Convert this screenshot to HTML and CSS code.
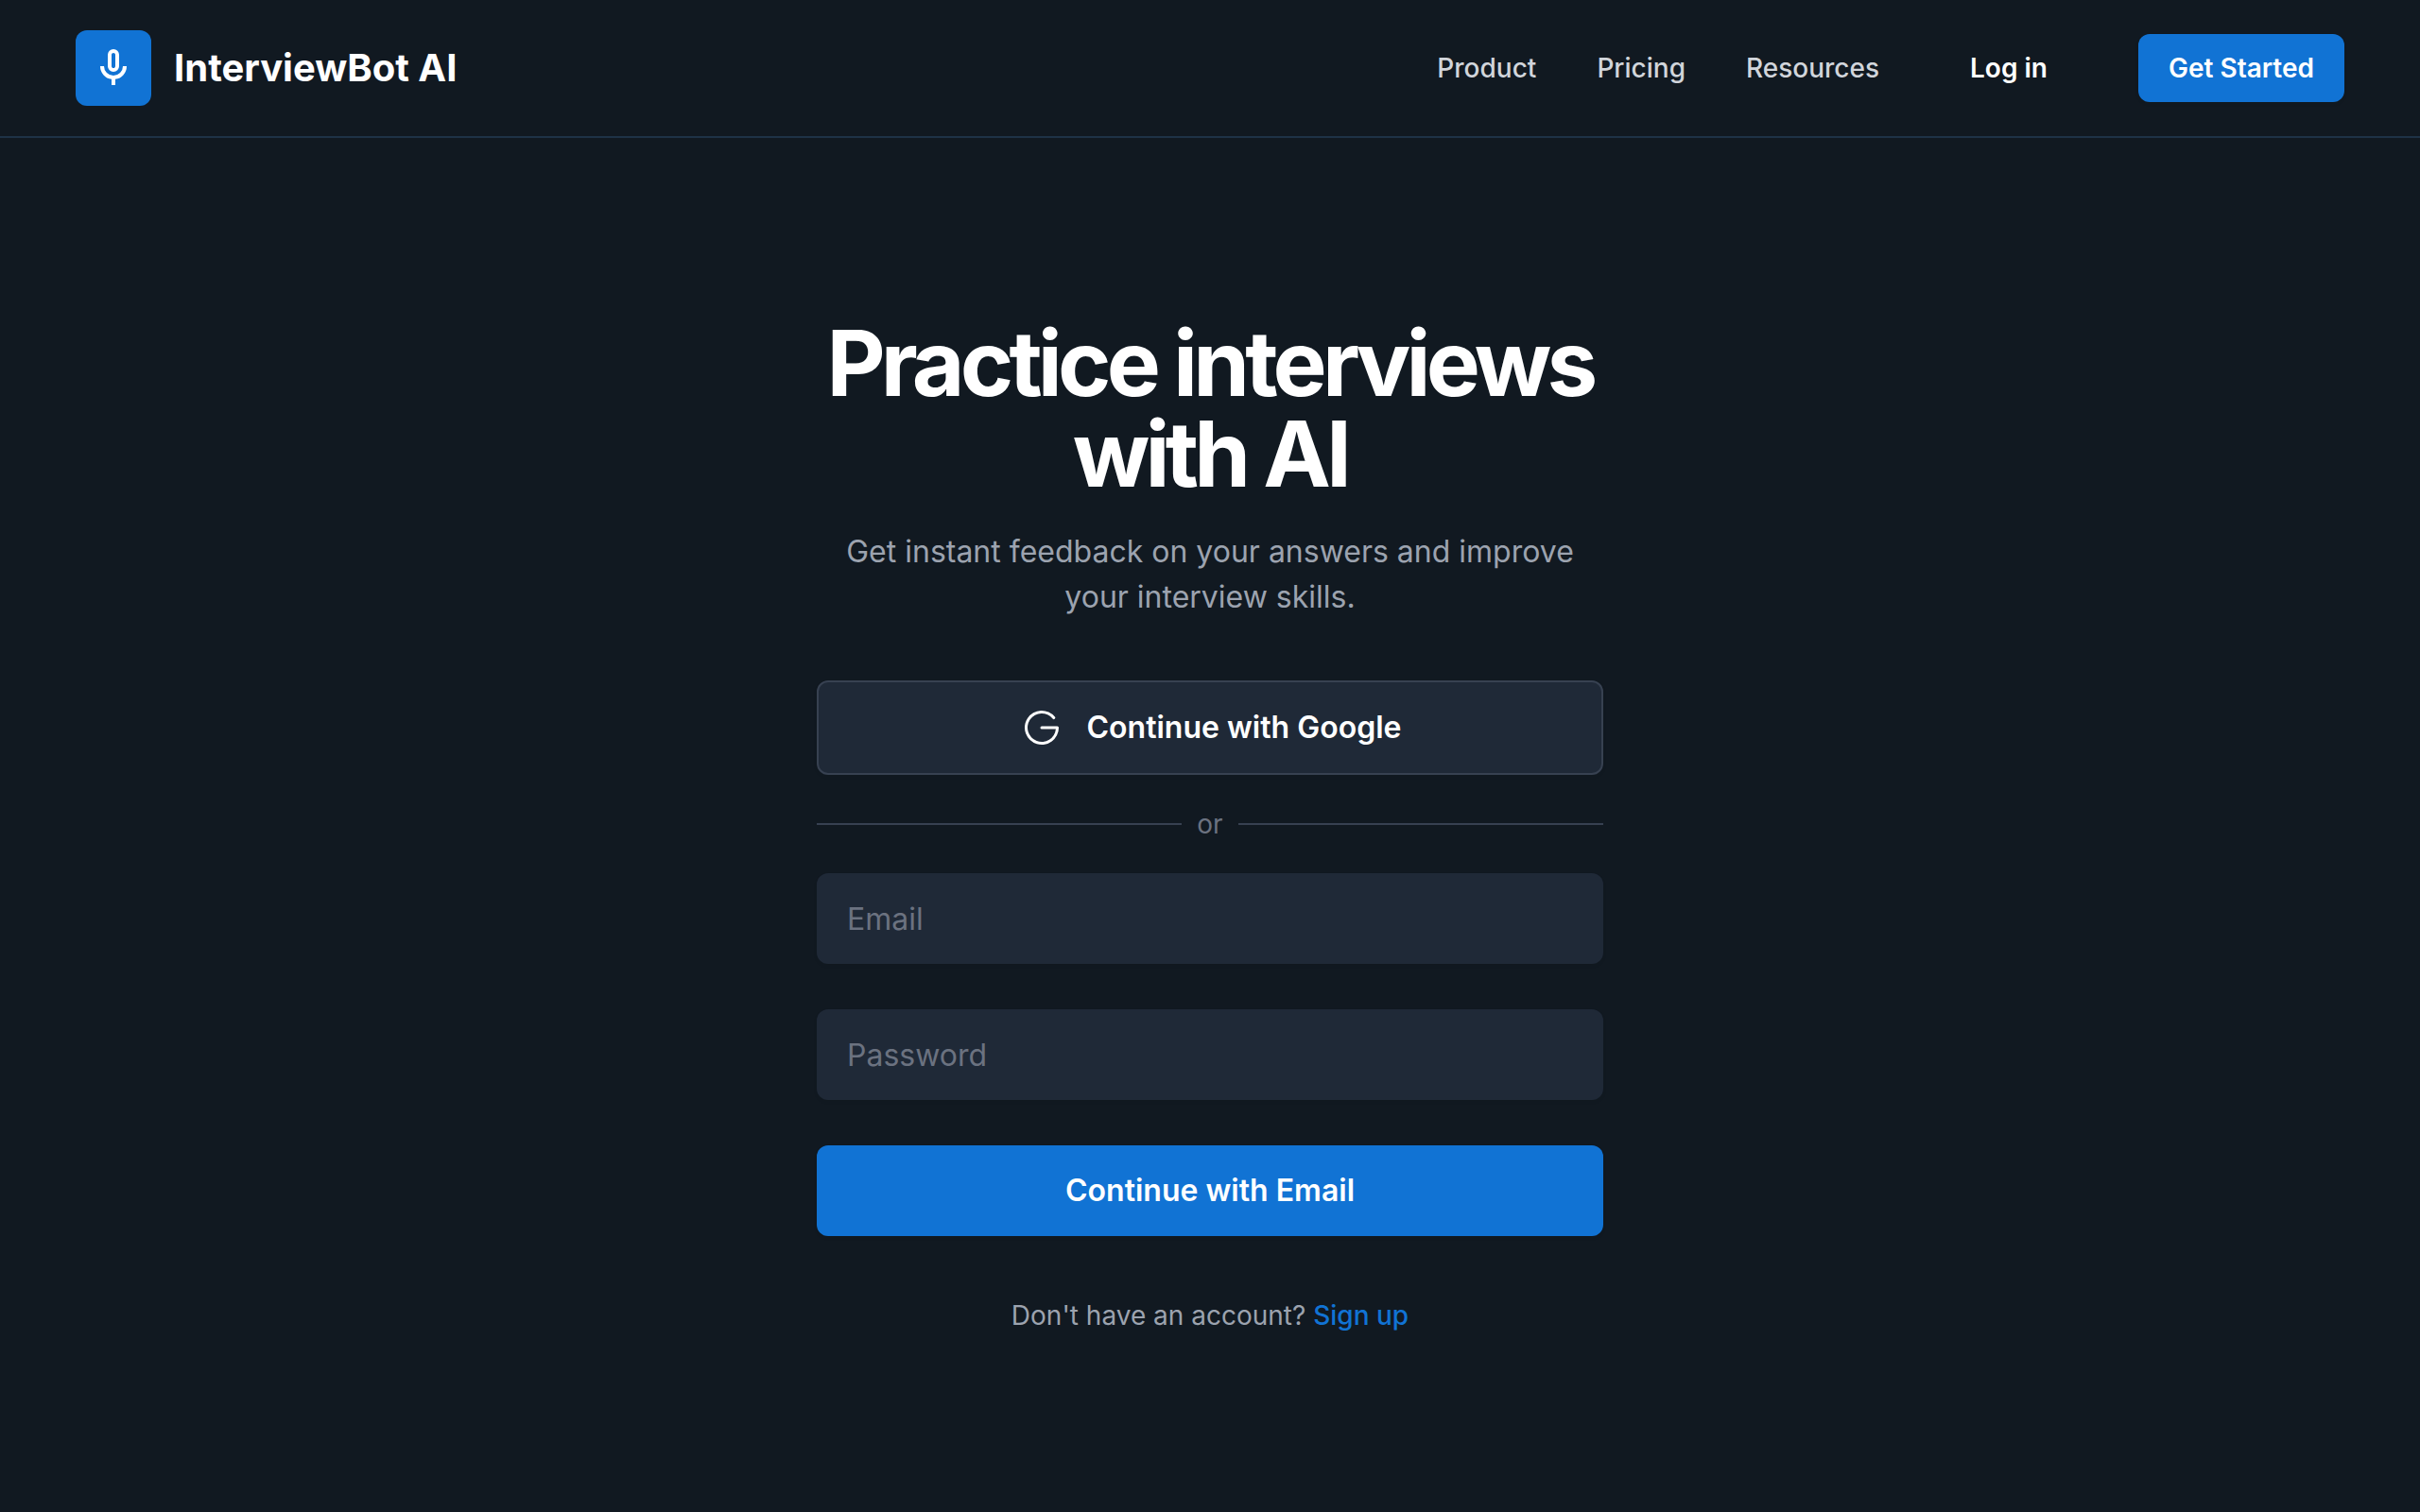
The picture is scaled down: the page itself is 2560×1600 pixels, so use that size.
FILE: index.html
```html
<!DOCTYPE html>
<html lang="en">
<head>
  <meta charset="utf-8">
  <meta name="viewport" content="width=device-width, initial-scale=1">
  <title>InterviewBot AI</title>
  <link rel="stylesheet" href="styles.css">
</head>
<body>
  <header class="site-header">
    <div class="brand">
      <div class="brand-mark">
        <svg class="icon" viewBox="0 -960 960 960" fill="currentColor" aria-hidden="true">
          <path d="M480-400q-50 0-85-35t-35-85v-240q0-50 35-85t85-35q50 0 85 35t35 85v240q0 50-35 85t-85 35Zm-40 280v-123q-104-14-172-93t-68-184h80q0 83 58.5 141.500T480-320q83 0 141.500-58.500T680-520h80q0 105-68 184t-172 93v123h-80Zm40-360q17 0 28.500-11.500T520-520v-240q0-17-11.500-28.500T480-800q-17 0-28.500 11.500T440-760v240q0 17 11.500 28.500T480-480Z"/>
        </svg>
      </div>
      <span class="brand-name">InterviewBot AI</span>
    </div>
    <nav class="site-nav">
      <a class="nav-link" href="#">Product</a>
      <a class="nav-link" href="#">Pricing</a>
      <a class="nav-link" href="#">Resources</a>
      <button class="nav-button nav-button-plain" type="button">Log in</button>
      <button class="nav-button nav-button-primary" type="button">Get Started</button>
    </nav>
  </header>

  <main class="page">
    <section class="auth">
      <h1 class="title">Practice interviews with AI</h1>
      <p class="subtitle">Get instant feedback on your answers and improve your interview skills.</p>

      <button class="button button-google" type="button">
        <svg class="icon" viewBox="0 0 256 256" fill="currentColor" aria-hidden="true">
          <path d="M224,128a96,96,0,1,1-21.950-61.090,8,8,0,1,1-12.330,10.180A80,80,0,1,0,207.600,136H128a8,8,0,0,1,0-16h88A8,8,0,0,1,224,128Z"/>
        </svg>
        <span>Continue with Google</span>
      </button>

      <div class="divider"><span>or</span></div>

      <form class="auth-form">
        <input class="field" type="email" placeholder="Email" aria-label="Email">
        <input class="field" type="password" placeholder="Password" aria-label="Password">
        <button class="button button-primary" type="submit">Continue with Email</button>
      </form>

      <p class="signup">Don't have an account? <a class="signup-link" href="#">Sign up</a></p>
    </section>
  </main>
</body>
</html>
```
FILE: styles.css
```css
:root {
  --bg: #111921;
  --primary: #1173d4;
  --surface: #1f2937;
  --line: #374151;
  --header-line: #1e3246;
  --text: #ffffff;
  --text-soft: #d1d5db;
  --text-muted: #9ca3af;
  --text-faint: #6b7280;
  --shadow: 0 2px 4px rgba(0, 0, 0, 0.05);
}

*,
*::before,
*::after {
  box-sizing: border-box;
}

body {
  margin: 0;
  min-height: 100vh;
  background: var(--bg);
  color: var(--text);
  font-family: Inter, "Noto Sans", sans-serif;
  font-size: 32px;
  line-height: 48px;
}

button,
input {
  font: inherit;
  color: inherit;
  border: 0;
  margin: 0;
}

button {
  cursor: pointer;
}

a {
  text-decoration: none;
}

.icon {
  width: 48px;
  height: 48px;
  flex: none;
}

.site-header {
  display: flex;
  align-items: center;
  justify-content: space-between;
  padding: 32px 80px;
  border-bottom: 2px solid var(--header-line);
}

.brand {
  display: flex;
  align-items: center;
  gap: 24px;
}

.brand-mark {
  display: grid;
  place-items: center;
  width: 80px;
  height: 80px;
  border-radius: 12px;
  background: var(--primary);
}

.brand-name {
  font-size: 40px;
  font-weight: 700;
}

.site-nav {
  display: flex;
  align-items: center;
  gap: 64px;
  font-size: 28px;
  line-height: 40px;
}

.nav-link {
  color: var(--text-soft);
  font-weight: 500;
}

.nav-button {
  padding: 16px 32px;
  border-radius: 12px;
  font-weight: 600;
}

.nav-button-plain {
  background: none;
}

.nav-button-primary {
  background: var(--primary);
  box-shadow: var(--shadow);
}

.page {
  padding: 190px 32px 96px;
}

.auth {
  max-width: 832px;
  margin: 0 auto;
  text-align: center;
}

.title {
  margin: 0 0 32px;
  font-size: 96px;
  font-weight: 700;
  line-height: 96px;
  letter-spacing: -0.05em;
}

.subtitle {
  margin: 0 0 64px;
  color: var(--text-muted);
}

.button {
  display: flex;
  align-items: center;
  justify-content: center;
  gap: 24px;
  width: 100%;
  padding: 24px 32px;
  border-radius: 12px;
  font-weight: 600;
  box-shadow: var(--shadow);
}

.button-google {
  border: 2px solid var(--line);
  background: var(--surface);
}

.button-primary {
  background: var(--primary);
}

.divider {
  display: flex;
  align-items: center;
  gap: 16px;
  margin: 32px 0;
  color: var(--text-faint);
  font-size: 28px;
  line-height: 40px;
}

.divider::before,
.divider::after {
  content: "";
  flex: 1;
  border-top: 2px solid var(--line);
}

.auth-form {
  display: grid;
  gap: 48px;
}

.field {
  width: 100%;
  height: 96px;
  padding: 24px 32px;
  border-radius: 12px;
  background: var(--surface);
  box-shadow: var(--shadow);
}

.field::placeholder {
  color: var(--text-faint);
  opacity: 1;
}

.signup {
  margin: 64px 0 0;
  color: var(--text-muted);
  font-size: 28px;
  line-height: 40px;
}

.signup-link {
  color: var(--primary);
  font-weight: 500;
}
```
